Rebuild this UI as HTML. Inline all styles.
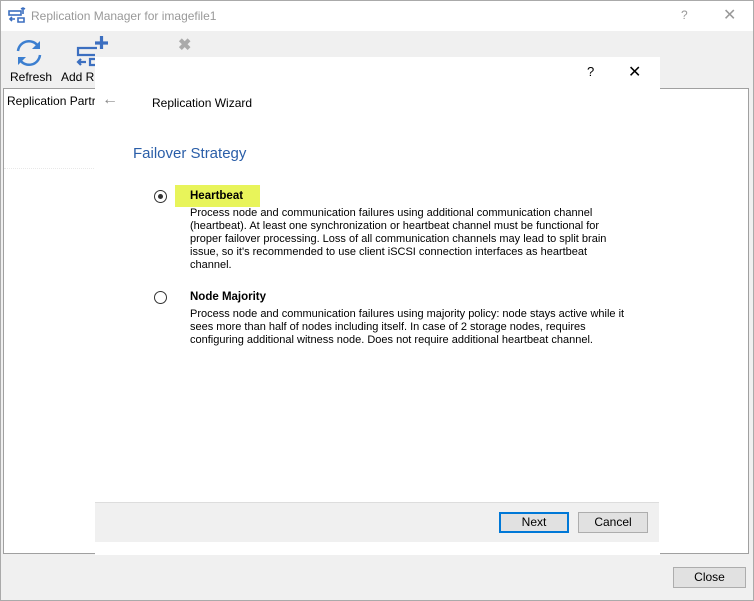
<!DOCTYPE html>
<html><head><style>
*{margin:0;padding:0;box-sizing:border-box}
body{width:754px;height:601px;position:relative;background:#f0f0f0;font-family:"Liberation Sans",sans-serif;overflow:hidden;color:#000}
.abs{position:absolute}
.win{left:0;top:0;width:754px;height:601px;border:1px solid #aaa}
.title{left:1px;top:1px;width:752px;height:30px;background:#fff}
.btn{position:absolute;background:#e1e1e1;border:1px solid #adadad;font-size:12px;text-align:center;line-height:18px}
.desc{font-size:11px;line-height:13px;color:#000}
</style></head><body>
<div class="abs win"></div>
<div class="abs title"></div>
<svg class="abs" style="left:8px;top:7px" width="18" height="18" viewBox="0 0 18 18"><g fill="none" stroke="#3c6fc0" stroke-width="1.6"><rect x="1" y="4" width="12" height="4"/><path d="M2 12h5M4 10l-2 2 2 2M10 11h6v4h-6z"/><path d="M15 1v6M13 2l2-1 2 1"/></g></svg>
<div class="abs" style="left:31px;top:9px;font-size:12px;color:#999">Replication Manager for imagefile1</div>
<div class="abs" style="left:681px;top:8px;font-size:12px;color:#999">?</div>
<div class="abs" style="left:723px;top:5px;font-size:16px;color:#999">✕</div>
<svg class="abs" style="left:14px;top:38px" width="30" height="30" viewBox="0 0 30 30"><g fill="none" stroke="#3c7fd0" stroke-width="2.5"><path d="M4 13a11 11 0 0 1 20-5"/><path d="M26 17a11 11 0 0 1-20 5"/></g><path d="M26 3v8h-8z" fill="#3c7fd0"/><path d="M4 27v-8h8z" fill="#3c7fd0"/></svg>
<div class="abs" style="left:10px;top:70px;font-size:12px">Refresh</div>
<svg class="abs" style="left:75px;top:36px" width="34" height="32" viewBox="0 0 34 32"><g fill="none" stroke="#3c6fc0" stroke-width="2.2"><path d="M22 12H3v7h17"/><path d="M3 26h8M6 23l-3 3 3 3M15 23h10v6H15z"/></g><path d="M20 7h13M26.5 0v13" stroke="#3c6fc0" stroke-width="3.2"/></svg>
<div class="abs" style="left:61px;top:70px;font-size:12px">Add R</div>
<div class="abs" style="left:178px;top:35px;font-size:16px;color:#aaa;font-weight:bold">✖</div>
<div class="abs" style="left:3px;top:88px;width:746px;height:466px;background:#fff;border:1px solid #a0a0a0"></div>
<div class="abs" style="left:7px;top:94px;font-size:12px">Replication Partr</div>
<div class="abs" style="left:4px;top:168px;width:90px;border-top:1px dotted #e8e8e8"></div>
<!-- dialog -->
<div class="abs" style="left:95px;top:57px;width:565px;height:498px;background:#fff"></div>
<div class="abs" style="left:587px;top:64px;font-size:13px">?</div>
<div class="abs" style="left:628px;top:62px;font-size:16px">✕</div>
<div class="abs" style="left:102px;top:91px;font-size:16px;color:#888">←</div>
<div class="abs" style="left:152px;top:96px;font-size:12px">Replication Wizard</div>
<div class="abs" style="left:133px;top:145px;font-size:15px;color:#2a5ea8">Failover Strategy</div>
<div class="abs" style="left:154px;top:190px;width:13px;height:13px;border:1px solid #333;border-radius:50%;background:#fff"><div style="margin:3px;width:5px;height:5px;border-radius:50%;background:#333"></div></div>
<div class="abs" style="left:175px;top:185px;width:85px;height:22px;background:#e8f45a"></div>
<div class="abs" style="left:190px;top:190px;font-size:11.5px;font-weight:bold">Heartbeat</div>
<div class="abs desc" style="left:190px;top:207px;width:440px">Process node and communication failures using additional communication channel<br>(heartbeat). At least one synchronization or heartbeat channel must be functional for<br>proper failover processing. Loss of all communication channels may lead to split brain<br>issue, so it's recommended to use client iSCSI connection interfaces as heartbeat<br>channel.</div>
<div class="abs" style="left:154px;top:291px;width:13px;height:13px;border:1px solid #333;border-radius:50%;background:#fff"></div>
<div class="abs" style="left:190px;top:291px;font-size:11.5px;font-weight:bold">Node Majority</div>
<div class="abs desc" style="left:190px;top:308px;width:450px">Process node and communication failures using majority policy: node stays active while it<br>sees more than half of nodes including itself. In case of 2 storage nodes, requires<br>configuring additional witness node. Does not require additional heartbeat channel.</div>
<div class="abs" style="left:95px;top:502px;width:564px;height:40px;background:#f0f0f0;border-top:1px solid #ddd"></div>
<div class="btn" style="left:499px;top:512px;width:70px;height:21px;border:2px solid #0078d7;line-height:17px">Next</div>
<div class="btn" style="left:578px;top:512px;width:70px;height:21px">Cancel</div>
<div class="btn" style="left:673px;top:567px;width:73px;height:21px">Close</div>
</body></html>
